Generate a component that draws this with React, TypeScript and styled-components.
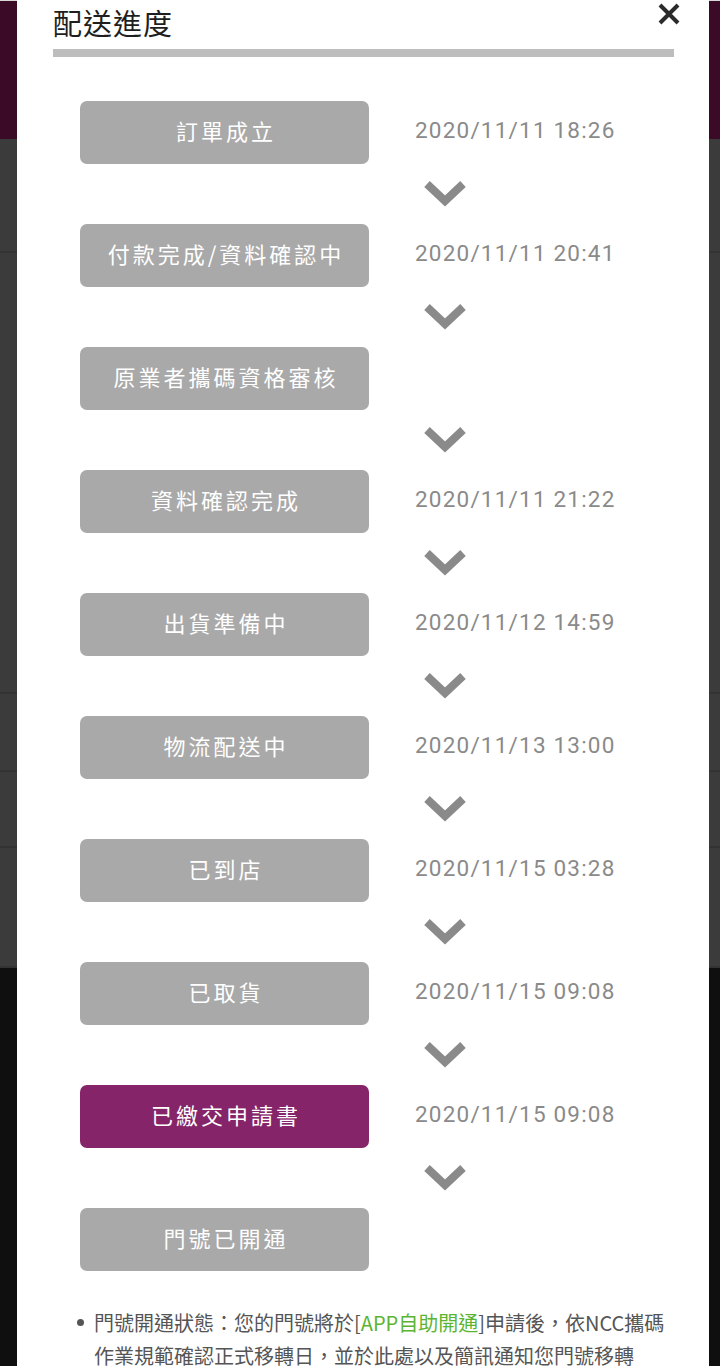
import React from "react";
import styled, { createGlobalStyle } from "styled-components";

const GlobalStyle = createGlobalStyle`
  html, body {
    margin: 0;
    padding: 0;
    background: #0f0f0f;
    overflow: hidden;
  }
  body {
    font-family: "Noto Sans CJK TC", "Noto Sans", sans-serif;
  }
  * { box-sizing: border-box; }
`;

const Page = styled.div`
  position: relative;
  width: 720px;
  height: 1366px;
  overflow: hidden;
  display: flex;
  flex-direction: column;
`;

const Backdrop = styled.div`
  display: flex;
  flex-direction: column;
`;

const HeaderBand = styled.div`
  height: 139px;
  background: #3a0a27;
  border-top: 1px solid #d8d8d8;
`;

const GrayBlock = styled.div<{ $h: number }>`
  height: ${(p) => p.$h}px;
  background: #3b3b3b;
  border-bottom: 2px solid #333333;
`;

const BlackBlock = styled.div`
  flex: 1;
  background: #0f0f0f;
`;

const Modal = styled.div`
  position: absolute;
  top: 0;
  left: 17px;
  width: 692px;
  height: 1400px;
  background: #ffffff;
  padding: 0 35px 0 36px;
  display: flex;
  flex-direction: column;
`;

const ModalHeader = styled.div`
  display: flex;
  justify-content: space-between;
  align-items: flex-start;
  height: 49px;
  border-bottom: 8px solid #bdbdbd;
  box-sizing: content-box;
`;

const Title = styled.h2`
  margin: 5px 0 0 0;
  font-family: "Noto Sans CJK TC", sans-serif;
  font-weight: 400;
  font-size: 29px;
  line-height: 35px;
  color: #1e1e1e;
  letter-spacing: 1px;
`;

const CloseButton = styled.button`
  margin: 2px -7px 0 0;
  padding: 0;
  width: 24px;
  height: 24px;
  border: none;
  background: transparent;
  display: flex;
  align-items: center;
  justify-content: center;
`;

const Steps = styled.div`
  margin-top: 44px;
  padding-left: 27px;
  display: flex;
  flex-direction: column;
`;

const StepRow = styled.div`
  display: flex;
  align-items: center;
  gap: 46px;
`;

const StepButton = styled.div<{ $active?: boolean }>`
  width: 289px;
  height: 63px;
  border-radius: 7px;
  background: ${(p) => (p.$active ? "#852468" : "#a9a9a9")};
  color: #ffffff;
  display: flex;
  align-items: center;
  justify-content: center;
  font-family: "Noto Sans CJK TC", sans-serif;
  font-size: 22px;
  line-height: 1;
  letter-spacing: 3px;
  padding: 0 0 5px 3px;
`;

const StepDate = styled.div`
  font-family: Roboto, "Noto Sans", sans-serif;
  font-size: 22.5px;
  letter-spacing: 1.2px;
  color: #8a8a8a;
  margin-bottom: 5px;
`;

const ArrowRow = styled.div`
  height: 60px;
  display: flex;
  align-items: center;
  padding-left: 343px;
`;

const Note = styled.ul`
  margin: 35px 0 0 0;
  padding: 0 0 0 41px;
  list-style: none;
`;

const NoteItem = styled.li`
  position: relative;
  font-family: "Noto Sans CJK TC", sans-serif;
  font-size: 20px;
  line-height: 33px;
  color: #555555;
  &::before {
    content: "";
    position: absolute;
    left: -17px;
    top: 13px;
    width: 7px;
    height: 7px;
    border-radius: 50%;
    background: #555555;
  }
`;

const GreenText = styled.span`
  color: #5cb531;
`;

const Chevron = () => (
  <svg width="44" height="30" viewBox="0 0 44 30">
    <polyline
      points="4,5 22,22 40,5"
      fill="none"
      stroke="#8a8a8a"
      strokeWidth="8"
      strokeLinejoin="miter"
      strokeLinecap="butt"
    />
  </svg>
);

const steps: { label: string; date?: string; active?: boolean }[] = [
  { label: "訂單成立", date: "2020/11/11 18:26" },
  { label: "付款完成/資料確認中", date: "2020/11/11 20:41" },
  { label: "原業者攜碼資格審核" },
  { label: "資料確認完成", date: "2020/11/11 21:22" },
  { label: "出貨準備中", date: "2020/11/12 14:59" },
  { label: "物流配送中", date: "2020/11/13 13:00" },
  { label: "已到店", date: "2020/11/15 03:28" },
  { label: "已取貨", date: "2020/11/15 09:08" },
  { label: "已繳交申請書", date: "2020/11/15 09:08", active: true },
  { label: "門號已開通" },
];

export default function App() {
  return (
    <>
      <GlobalStyle />
      <Page>
        <Backdrop>
          <HeaderBand />
          <GrayBlock $h={114} />
          <GrayBlock $h={441} />
          <GrayBlock $h={78} />
          <GrayBlock $h={76} />
          <GrayBlock $h={120} />
        </Backdrop>
        <BlackBlock />
        <Modal>
          <ModalHeader>
            <Title>配送進度</Title>
            <CloseButton aria-label="close">
              <svg width="22" height="22" viewBox="0 0 22 22">
                <path
                  d="M2 2 L20 20 M20 2 L2 20"
                  stroke="#2b2b2b"
                  strokeWidth="4"
                  strokeLinecap="butt"
                />
              </svg>
            </CloseButton>
          </ModalHeader>
          <Steps>
            {steps.map((s, i) => (
              <React.Fragment key={i}>
                <StepRow>
                  <StepButton $active={s.active}>{s.label}</StepButton>
                  {s.date && <StepDate>{s.date}</StepDate>}
                </StepRow>
                {i < steps.length - 1 && (
                  <ArrowRow>
                    <Chevron />
                  </ArrowRow>
                )}
              </React.Fragment>
            ))}
          </Steps>
          <Note>
            <NoteItem>
              門號開通狀態：您的門號將於[<GreenText>APP自助開通</GreenText>]申請後，依NCC攜碼作業規範確認正式移轉日，並於此處以及簡訊通知您門號移轉
            </NoteItem>
          </Note>
        </Modal>
      </Page>
    </>
  );
}
